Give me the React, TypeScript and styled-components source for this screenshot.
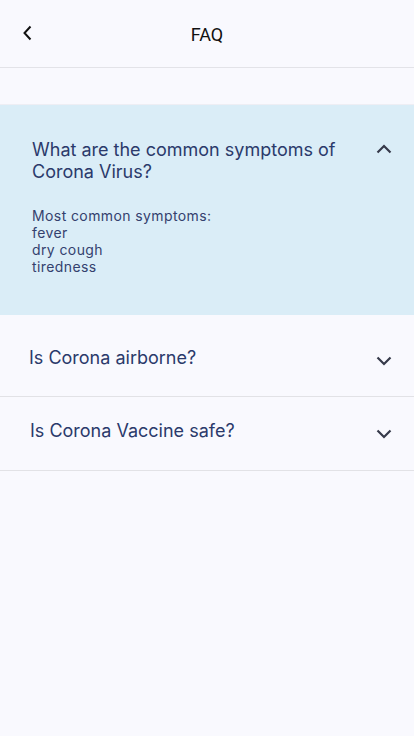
import { useState } from 'react'
import styled, { createGlobalStyle } from 'styled-components'

const faqs = [
  {
    q: 'What are the common symptoms of Corona Virus?',
    a: ['Most common symptoms:', 'fever', 'dry cough', 'tiredness'],
    height: 82,
    top: 32,
    indent: 32,
  },
  { q: 'Is Corona airborne?', a: ['It can spread through droplets.'], height: 82, top: 32, indent: 29 },
  { q: 'Is Corona Vaccine safe?', a: ['Yes, approved vaccines are safe.'], height: 74, top: 23, indent: 30 },
]

export default function App() {
  const [open, setOpen] = useState(0)
  return (
    <Page>
      <GlobalStyle />
      <Header>
        <BackButton aria-label="Back">
          <svg width="12" height="16" viewBox="0 0 12 16" fill="none">
            <path d="M8.5 1.5 L2.5 8 L8.5 14.5" stroke="#111" strokeWidth="2" />
          </svg>
        </BackButton>
        <Title>FAQ</Title>
      </Header>
      <Spacer />
      <List>
        {faqs.map((f, i) => {
          const isOpen = open === i
          return (
            <Item key={f.q} $open={isOpen} $height={f.height} $top={f.top}>
              <Question $indent={f.indent} onClick={() => setOpen(isOpen ? -1 : i)}>
                <QuestionText>{f.q}</QuestionText>
                <Chevron $open={isOpen}>
                  <svg width="16" height="10" viewBox="0 0 16 10" fill="none">
                    <path d="M1.5 1.5 L8 8 L14.5 1.5" stroke="#363a4a" strokeWidth="2.2" />
                  </svg>
                </Chevron>
              </Question>
              {isOpen && (
                <Answer>
                  {f.a.map((line) => (
                    <div key={line}>{line}</div>
                  ))}
                </Answer>
              )}
            </Item>
          )
        })}
      </List>
    </Page>
  )
}

const GlobalStyle = createGlobalStyle`
  html, body {
    margin: 0;
    padding: 0;
    background: #f9f9fe;
  }
  * { box-sizing: border-box; }
`

const Page = styled.div`
  width: 414px;
  min-height: 736px;
  background: #f9f9fe;
  font-family: Inter, 'Liberation Sans', sans-serif;
`

const Header = styled.header`
  position: relative;
  height: 68px;
  display: flex;
  align-items: center;
  justify-content: center;
  border-bottom: 1px solid #e3e3e8;
`

const BackButton = styled.button`
  position: absolute;
  left: 18px;
  top: 24px;
  width: 20px;
  height: 18px;
  padding: 0;
  border: none;
  background: none;
  display: flex;
  align-items: center;
  justify-content: center;
`

const Title = styled.h1`
  margin: 0;
  margin-top: 2px;
  font-family: Roboto, 'Liberation Sans', sans-serif;
  font-weight: 400;
  font-size: 18px;
  color: #111;
`

const Spacer = styled.div`
  height: 37px;
  border-bottom: 1px solid #eeeef4;
`

const List = styled.div`
  display: flex;
  flex-direction: column;
`

const Item = styled.section<{ $open: boolean; $height: number; $top: number }>`
  background: ${(p) => (p.$open ? '#daedf7' : 'transparent')};
  border-bottom: ${(p) => (p.$open ? 'none' : '1px solid #e2e2e6')};
  padding: ${(p) => (p.$open ? '34px 0 40px' : `${p.$top}px 0 0`)};
  height: ${(p) => (p.$open ? 'auto' : `${p.$height}px`)};
  display: flex;
  flex-direction: column;
`

const Question = styled.div<{ $indent: number }>`
  display: flex;
  align-items: flex-start;
  justify-content: space-between;
  padding: 0 22px 0 ${(p) => p.$indent}px;
  cursor: pointer;
`

const QuestionText = styled.h2`
  margin: 0;
  max-width: 310px;
  font-size: 18px;
  font-weight: 400;
  line-height: 22px;
  color: #2b3a6b;
`

const Chevron = styled.span<{ $open: boolean }>`
  display: flex;
  margin-top: ${(p) => (p.$open ? '5px' : '9px')};
  transform: rotate(${(p) => (p.$open ? '180deg' : '0')});
`

const Answer = styled.div`
  margin-top: 24px;
  padding-left: 32px;
  font-size: 14px;
  line-height: 17px;
  letter-spacing: 0.4px;
  color: #34416e;
`
